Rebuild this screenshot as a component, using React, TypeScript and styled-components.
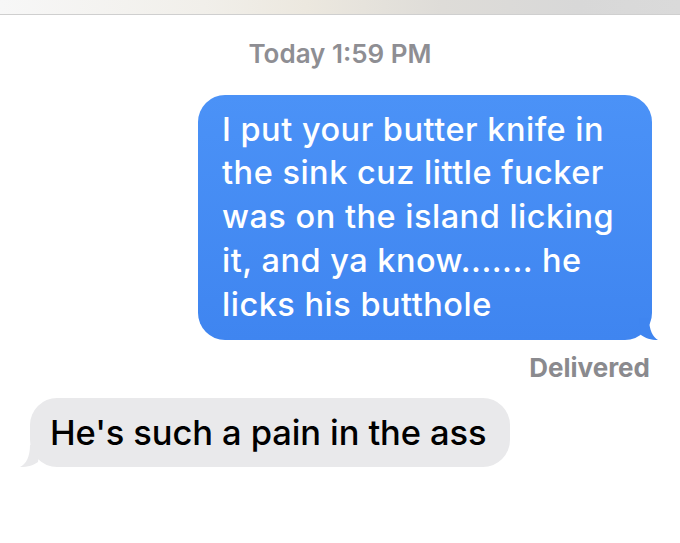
import React from "react";
import styled, { createGlobalStyle } from "styled-components";

const Global = createGlobalStyle`
  html, body { margin: 0; padding: 0; background: #ffffff; }
  body { font-family: Inter, "Noto Sans", "Liberation Sans", sans-serif; -webkit-font-smoothing: antialiased; }
`;

const Page = styled.div`
  width: 680px;
  height: 543px;
  overflow: hidden;
  background: #fff;
  display: flex;
  flex-direction: column;
`;

const TopBar = styled.div`
  height: 14px;
  flex: none;
  background: linear-gradient(90deg, #f7f7f7 0%, #f1efea 30%, #ece8df 45%, #dedcd8 65%, #d8d8d8 85%, #dadada 100%);
  border-bottom: 1px solid #cfcfcf;
`;

const Thread = styled.div`
  display: flex;
  flex-direction: column;
  padding: 0 20px 0 18px;
`;

const Stamp = styled.div`
  margin-top: 26px;
  height: 26px;
  text-align: center;
  color: #8e8e93;
  font-size: 26px;
  font-weight: 600;
  line-height: 26px;
  padding-left: 2px;
`;

const Row = styled.div<{ $side: "left" | "right" }>`
  display: flex;
  justify-content: ${(p) => (p.$side === "right" ? "flex-end" : "flex-start")};
`;

const Bubble = styled.div<{ $sent?: boolean }>`
  position: relative;
  box-sizing: border-box;
  border-radius: 27px;
  background: ${(p) =>
    p.$sent ? "linear-gradient(180deg, #4b92f7 0%, #3f85f0 100%)" : "#e9e9eb"};
  color: ${(p) => (p.$sent ? "#ffffff" : "#000000")};
`;

const SentBubble = styled(Bubble)`
  margin-top: 28px;
  margin-right: 8px;
  width: 454px;
  padding: 12.5px 20px 13.75px 24px;
  font-size: 32.5px;
  letter-spacing: 0.5px;
  line-height: 43.75px;
  font-weight: 500;
`;

const ReceivedBubble = styled(Bubble)`
  margin-top: 17.5px;
  margin-left: 12px;
  padding: 13px 24px 12px 20px;
  font-size: 34.5px;
  line-height: 44px;
  font-weight: 500;
  letter-spacing: -0.1px;
`;

const Tail = styled.svg<{ $side: "left" | "right" }>`
  position: absolute;
  bottom: 0;
  ${(p) => (p.$side === "right" ? "right: -9px;" : "left: -12px;")}
  width: 22px;
  height: 22px;
`;

const Status = styled.div`
  margin-top: 14.5px;
  margin-right: 10px;
  height: 26px;
  text-align: right;
  color: #8a8a8e;
  font-size: 26px;
  font-weight: 700;
  line-height: 26px;
`;

export default function App() {
  return (
    <>
      <Global />
      <Page>
        <TopBar />
        <Thread>
          <Stamp>Today 1:59 PM</Stamp>
          <Row $side="right">
            <SentBubble $sent>
              I put your butter knife in the sink cuz little fucker was on the island licking it, and ya know....... he licks his butthole
              <Tail $side="right" viewBox="0 0 22 22">
                <path d="M0 0 L10 0 C10 12 14 19 19 22 C12 22 6 20 2 17 Z" fill="#3f85f0" />
              </Tail>
            </SentBubble>
          </Row>
          <Status>Delivered</Status>
          <Row $side="left">
            <ReceivedBubble>
              He's such a pain in the ass
              <Tail $side="left" viewBox="0 0 22 22">
                <path d="M22 0 L12 0 C12 12 8 19 2 22 C10 22 16 20 20 17 Z" fill="#e9e9eb" />
              </Tail>
            </ReceivedBubble>
          </Row>
        </Thread>
      </Page>
    </>
  );
}
